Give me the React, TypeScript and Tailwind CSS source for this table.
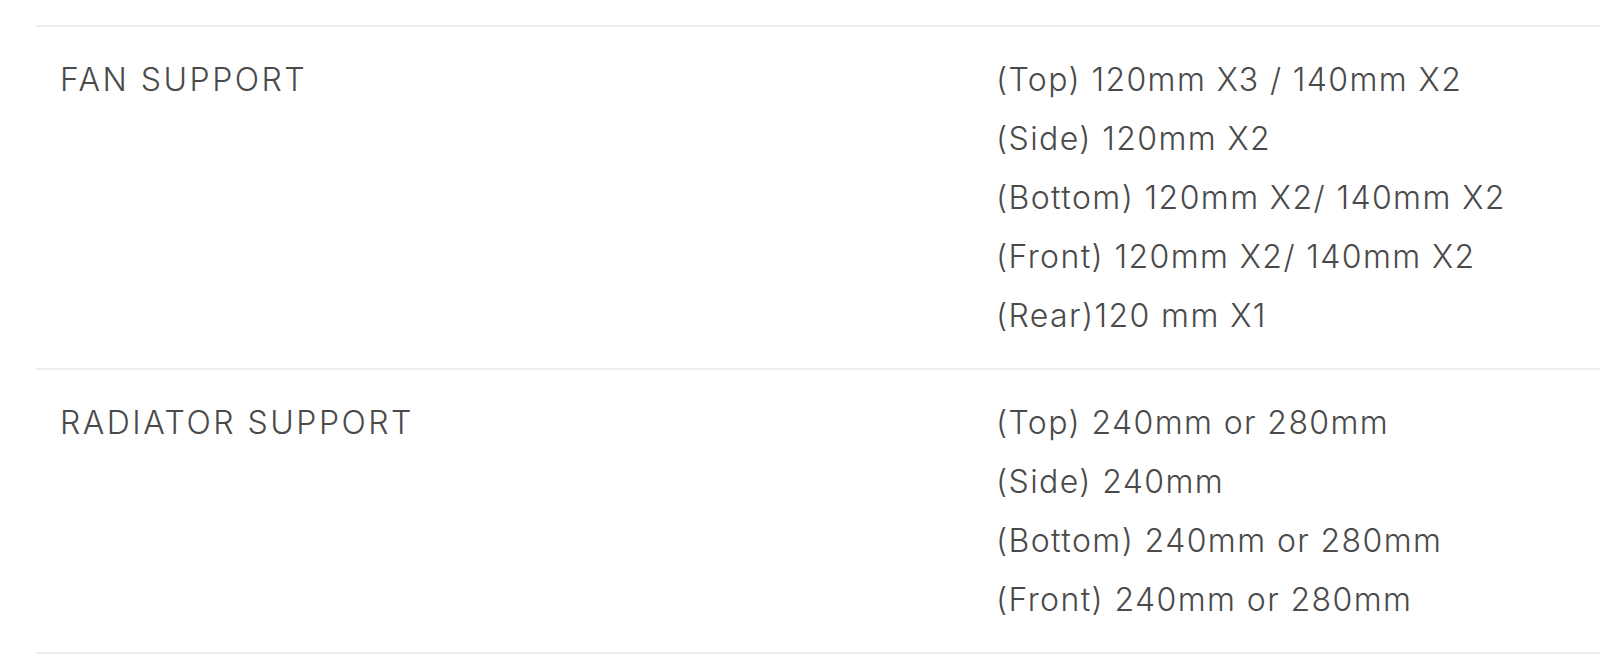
const specs = [
  {
    label: 'FAN SUPPORT',
    values: [
      '(Top) 120mm X3 / 140mm X2',
      '(Side) 120mm X2',
      '(Bottom) 120mm X2/ 140mm X2',
      '(Front) 120mm X2/ 140mm X2',
      '(Rear)120 mm X1',
    ],
  },
  {
    label: 'RADIATOR SUPPORT',
    values: [
      '(Top) 240mm or 280mm',
      '(Side) 240mm',
      '(Bottom) 240mm or 280mm',
      '(Front) 240mm or 280mm',
    ],
  },
];

export default function App() {
  return (
    <div className="w-[1600px] h-[655px] overflow-hidden bg-white pt-[25px] pl-9" style={{ fontFamily: 'Inter, sans-serif' }}>
      <div className="w-[1600px] border-b-2 border-[#ececec]">
        {specs.map((row) => (
          <div key={row.label} className="flex border-t-2 border-[#ececec] pt-[23px] pb-[23px] text-[32px] leading-[59px] font-light text-[#4a4a4a]">
            <div className="w-[960px] pl-6 shrink-0 tracking-[2.5px]">{row.label}</div>
            <div className="flex flex-col tracking-[1.4px]">
              {row.values.map((v) => (
                <div key={v}>{v}</div>
              ))}
            </div>
          </div>
        ))}
      </div>
    </div>
  );
}
